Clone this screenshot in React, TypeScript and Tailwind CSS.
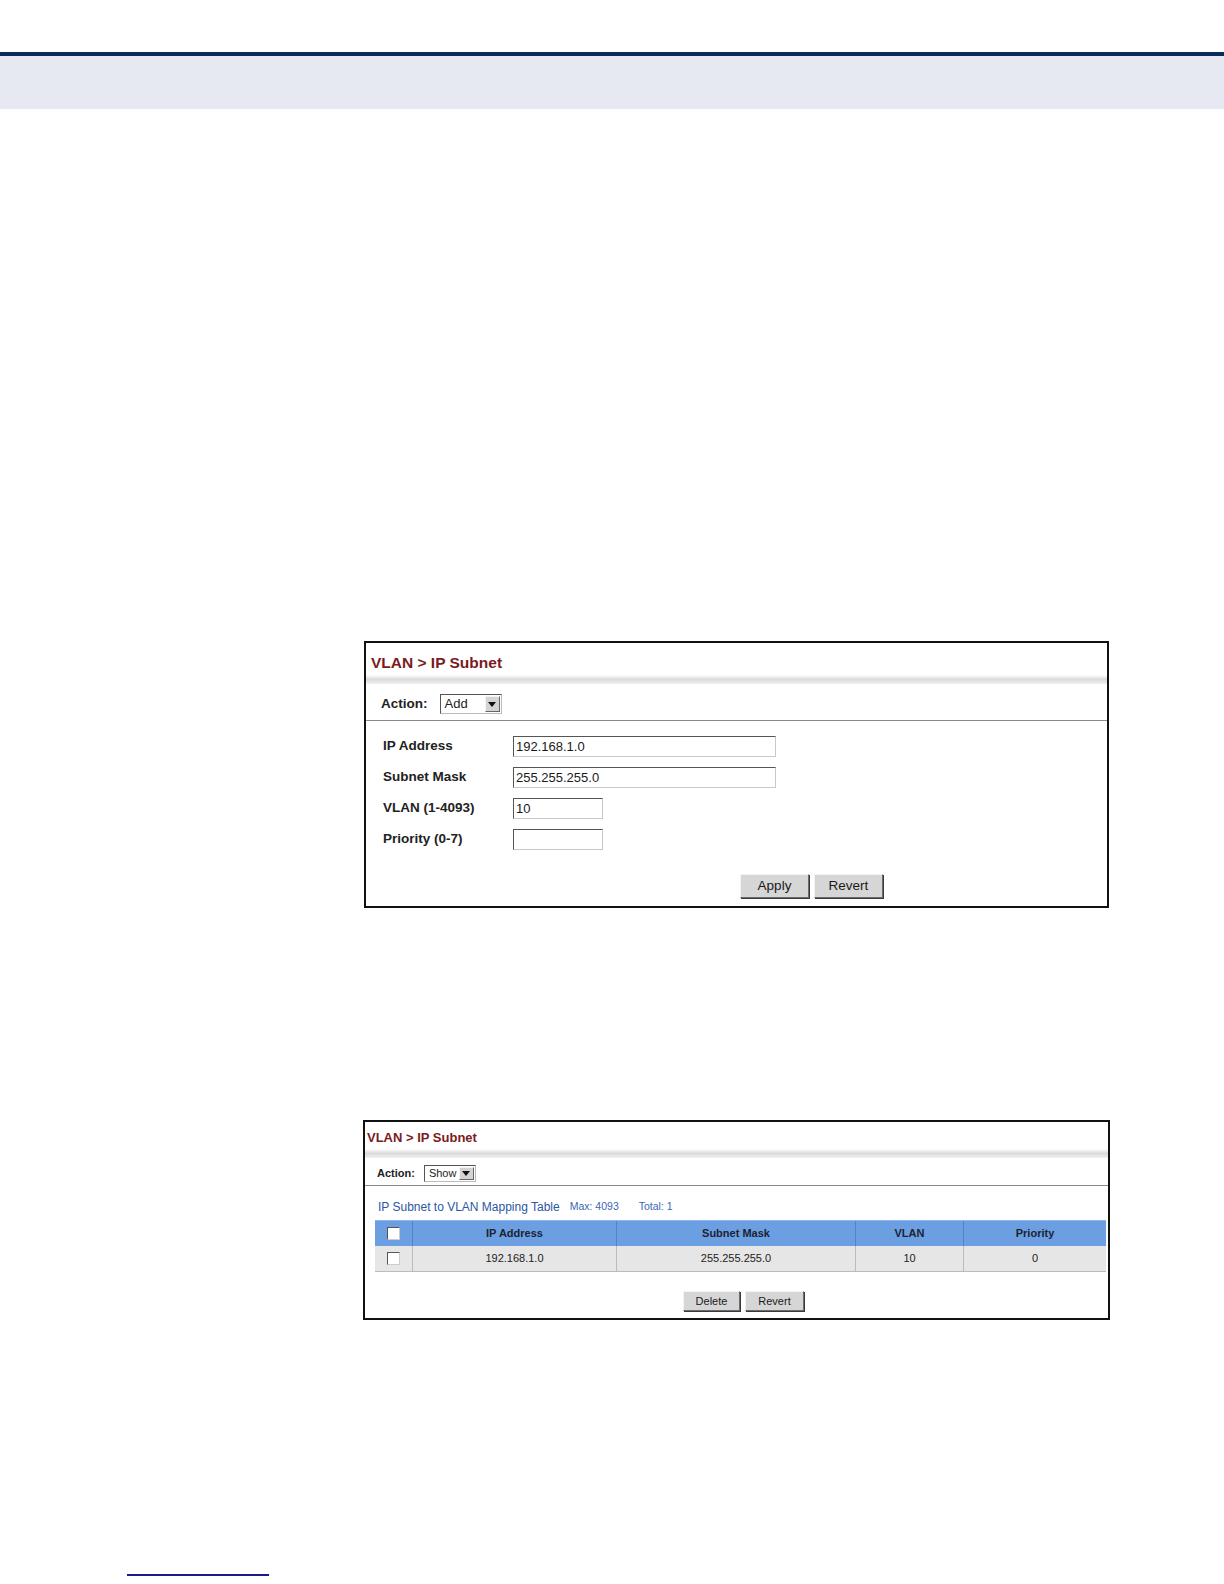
import * as React from "react"

// Screenshot of a switch manual page: two "VLAN > IP Subnet" web UI captures.

const FONT = { fontFamily: '"Liberation Sans", Arial, sans-serif' }

function ClassicButton({ label, w }: { label: string; w: string }) {
  return (
    <button
      type="button"
      className={`${w} h-full bg-[#d6d6d6] border border-t-[#f4f4f4] border-l-[#f4f4f4] border-r-[#6b6b6b] border-b-[#6b6b6b] shadow-[1px_1px_0_#3a3a3a] text-[#1a1a1a] flex items-center justify-center`}
    >
      {label}
    </button>
  )
}

function SelectBox({ value, w, h, text }: { value: string; w: string; h: string; text: string }) {
  return (
    <div className={`${w} ${h} flex items-stretch bg-white border border-t-[#555] border-l-[#555] border-r-[#bbb] border-b-[#bbb]`}>
      <div className={`flex-1 pl-[4px] flex items-center ${text} text-[#222]`}>{value}</div>
      <div className="w-[15px] m-[1px] bg-[#d4d4d4] border border-t-[#f4f4f4] border-l-[#f4f4f4] border-r-[#666] border-b-[#666] flex items-center justify-center">
        <svg width="8" height="5" viewBox="0 0 8 5">
          <path d="M0 0 L8 0 L4 5 Z" fill="#111" />
        </svg>
      </div>
    </div>
  )
}

function TextInput({ value, w }: { value: string; w: string }) {
  return (
    <div className={`${w} h-[21px] bg-white border border-t-[#555] border-l-[#555] border-r-[#c8c8c8] border-b-[#c8c8c8] pl-[2px] flex items-center text-[13px] text-[#1a1a1a]`}>
      {value}
    </div>
  )
}

function Checkbox() {
  return <div className="w-[13px] h-[13px] bg-white border border-t-[#555] border-l-[#555] border-r-[#ccc] border-b-[#ccc]" />
}

function Band() {
  return <div className="h-[9px] bg-gradient-to-b from-white via-[#dadada] to-[#f2f2f2]" />
}

function AddPanel() {
  const rows: [string, string, string][] = [
    ["IP Address", "192.168.1.0", "w-[263px]"],
    ["Subnet Mask", "255.255.255.0", "w-[263px]"],
    ["VLAN (1-4093)", "10", "w-[90px]"],
    ["Priority (0-7)", "", "w-[90px]"],
  ]
  return (
    <div className="ml-[364px] w-[745px] h-[267px] border-2 border-[#111] flex flex-col" style={FONT}>
      <div className="h-[32px] shrink-0 pl-[5px] pt-[11px] text-[15.5px] font-bold text-[#7a1b22] leading-[18px]">
        VLAN &gt; IP Subnet
      </div>
      <Band />
      <div className="h-[37px] shrink-0 border-b border-[#8a8a8a] flex items-center pl-[15px] gap-[12px] pt-[4px]">
        <span className="text-[13.5px] font-bold text-[#222]">Action:</span>
        <SelectBox value="Add" w="w-[62px]" h="h-[20px]" text="text-[13px]" />
      </div>
      <div className="flex flex-col gap-[10px] pt-[15px] pl-[17px]">
        {rows.map(([label, value, w]) => (
          <div key={label} className="h-[21px] flex items-center">
            <span className="w-[130px] text-[13.5px] font-bold text-[#222]">{label}</span>
            <TextInput value={value} w={w} />
          </div>
        ))}
      </div>
      <div className="h-[24px] mt-[24px] flex gap-[5px] pl-[374px] text-[13.5px]">
        <ClassicButton label="Apply" w="w-[69px]" />
        <ClassicButton label="Revert" w="w-[69px]" />
      </div>
    </div>
  )
}

function ShowPanel() {
  const cols = [
    { name: "IP Address", w: "w-[204px]", v: "192.168.1.0" },
    { name: "Subnet Mask", w: "w-[239px]", v: "255.255.255.0" },
    { name: "VLAN", w: "w-[108px]", v: "10" },
    { name: "Priority", w: "flex-1", v: "0" },
  ]
  return (
    <div className="ml-[363px] w-[747px] h-[200px] border-2 border-[#111] flex flex-col" style={FONT}>
      <div className="h-[27px] shrink-0 pl-[2px] pt-[8px] text-[13px] font-bold text-[#7a1b22] leading-[16px]">
        VLAN &gt; IP Subnet
      </div>
      <Band />
      <div className="h-[28px] shrink-0 border-b border-[#8a8a8a] flex items-center pl-[12px] gap-[9px] pt-[3px]">
        <span className="text-[11px] font-bold text-[#222]">Action:</span>
        <SelectBox value="Show" w="w-[52px]" h="h-[17px]" text="text-[11px]" />
      </div>
      <div className="h-[34px] shrink-0 flex items-end pb-[4px] pl-[13px] gap-[10px]">
        <span className="text-[12px] text-[#2b57a3]">IP Subnet to VLAN Mapping Table</span>
        <span className="text-[10.5px] text-[#3a66b4] mb-[1px]">Max: 4093</span>
        <span className="text-[10.5px] text-[#3a66b4] mb-[1px] ml-[10px]">Total: 1</span>
      </div>
      <div className="ml-[10px] mr-[2px] flex flex-col text-[11px]">
        <div className="h-[26px] flex bg-[#6b9fe2] border-t border-[#8fb7ee]">
          <div className="w-[38px] flex items-center justify-center border-r border-[#4f82c8]">
            <Checkbox />
          </div>
          {cols.map((c, i) => (
            <div
              key={c.name}
              className={`${c.w} flex items-center justify-center font-bold text-[#1c2333] ${i < 3 ? "border-r border-[#4f82c8]" : ""}`}
            >
              {c.name}
            </div>
          ))}
        </div>
        <div className="h-[26px] flex bg-[#e6e6e6] border-b border-[#bcbcbc]">
          <div className="w-[38px] flex items-center justify-center border-r border-[#bcbcbc]">
            <Checkbox />
          </div>
          {cols.map((c, i) => (
            <div
              key={c.name}
              className={`${c.w} flex items-center justify-center text-[#222] ${i < 3 ? "border-r border-[#bcbcbc]" : ""}`}
            >
              {c.v}
            </div>
          ))}
        </div>
      </div>
      <div className="h-[20px] mt-[19px] flex gap-[5px] pl-[318px] text-[11px]">
        <ClassicButton label="Delete" w="w-[57px]" />
        <ClassicButton label="Revert" w="w-[59px]" />
      </div>
    </div>
  )
}

export default function App() {
  return (
    <div className="w-[1224px] h-[1584px] bg-white relative overflow-hidden">
      <div className="h-[52px]" />
      <div className="h-[4px] bg-[#0b2a5c]" />
      <div className="h-[53px] bg-[#e6e9f1]" />
      <div className="h-[532px]" />
      <AddPanel />
      <div className="h-[212px]" />
      <ShowPanel />
      <div className="absolute left-[127px] top-[1574px] w-[142px] h-[2px] bg-[#1a1a8c]" />
    </div>
  )
}
